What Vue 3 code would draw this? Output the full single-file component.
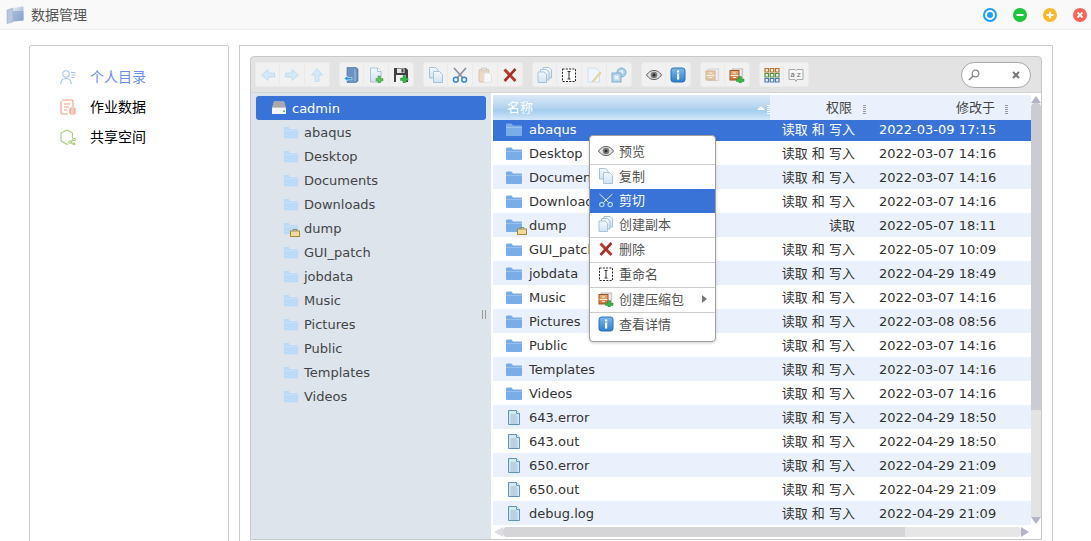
<template>
  <svg class="defs" width="0" height="0">
    <defs>
      <linearGradient id="g-doc" x1="0" y1="0" x2="0" y2="1"><stop offset="0" stop-color="#f4f9fd" /><stop offset="1" stop-color="#cfe2f1" /></linearGradient>
      <linearGradient id="g-info" x1="0" y1="0" x2="0" y2="1"><stop offset="0" stop-color="#7db8ee" /><stop offset="1" stop-color="#2f7fcb" /></linearGradient>
      <linearGradient id="g-box" x1="0" y1="0" x2="0" y2="1"><stop offset="0" stop-color="#e9b27c" /><stop offset="1" stop-color="#c9713a" /></linearGradient>
      <linearGradient id="g-title" x1="0" y1="0" x2="1" y2="1"><stop offset="0" stop-color="#e6ecf6" /><stop offset="1" stop-color="#8ea7cf" /></linearGradient>
      <symbol id="i-back" viewBox="0 0 16 16"><path d="M1.500 8 8 2.500V6h6.500v4H8v3.500z" fill="#d5e8f7" stroke="#c4deF1" /></symbol>
      <symbol id="i-forward" viewBox="0 0 16 16"><path d="M14.500 8 8 2.500V6H1.500v4H8v3.500z" fill="#d5e8f7" stroke="#c4deF1" /></symbol>
      <symbol id="i-up" viewBox="0 0 16 16"><path d="M8 1.500 13.500 8H10v6.500H6V8H2.500z" fill="#d5e8f7" stroke="#c4deF1" /></symbol>
      <symbol id="i-open" viewBox="0 0 16 16"><path d="M3 .5h9l2 1.500v12l-2 1.500H3z" fill="#6a93c2" stroke="#3f6795" stroke-width=".6" /><path d="M11 2v12" stroke="#a5c0dc" /><path d="M0 11.500 3.500 9v1.500H8v2.200H3.500v1.300z" fill="#1f8fe0" stroke="#fff" stroke-width=".5" /></symbol>
      <symbol id="i-newfile" viewBox="0 0 16 16"><path d="M2.500 1h7l3.500 3.500V15H2.500z" fill="url(#g-doc)" stroke="#a9c4d9" /><path d="M9.500 1v3.500H13" fill="#fff" stroke="#a9c4d9" /><path d="M10 9h2.500v2.500H15V14h-2.500v2H10v-2H8v-2.500h2z" fill="#5fbf57" stroke="#3e9a3b" stroke-width=".5" /></symbol>
      <symbol id="i-save" viewBox="0 0 16 16"><path d="M1 1h12l2 2v12H1z" fill="#3f3f44" /><rect x="4" y="1.500" width="7.500" height="4.500" fill="#e6e6e6" /><rect x="8.500" y="2" width="2" height="3.500" fill="#444" /><rect x="3" y="8" width="10" height="7" fill="#f3f3f3" /><path d="M10 8.500h2.500V11H15v2.500h-2.500V16H10v-2.500H7.500V11H10z" fill="#38b548" stroke="#208a33" stroke-width=".5" /></symbol>
      <symbol id="i-copy" viewBox="0 0 16 16"><path d="M1.500 .5h6L10 3v8H1.500z" fill="url(#g-doc)" stroke="#a6c3da" /><path d="M5.500 4.500h6l3 3v8h-9z" fill="url(#g-doc)" stroke="#a6c3da" /></symbol>
      <symbol id="i-cut" viewBox="0 0 16 16"><path d="M2 1 10.500 10.500M14 1 5.500 10.500" stroke="#8c939b" stroke-width="1.800" fill="none" /><circle cx="3.800" cy="12.700" r="2.400" fill="none" stroke="#3a86c9" stroke-width="1.500" /><circle cx="12.200" cy="12.700" r="2.400" fill="none" stroke="#3a86c9" stroke-width="1.500" /></symbol>
      <symbol id="i-cutw" viewBox="0 0 16 16"><path d="M1.500 2 10.500 10.500M14.500 2 5.500 10.500" stroke="#e4eefb" stroke-width="1" fill="none" /><circle cx="3.800" cy="12.500" r="2.200" fill="none" stroke="#a9d4f5" stroke-width="1.200" /><circle cx="12.200" cy="12.500" r="2.200" fill="none" stroke="#a9d4f5" stroke-width="1.200" /></symbol>
      <symbol id="i-paste" viewBox="0 0 16 16"><rect x="2" y="2.500" width="10" height="12.500" rx="1" fill="#ecd8c3" stroke="#dcc3a8" /><rect x="4.500" y="1" width="5" height="3" fill="#dedede" stroke="#c6c6c6" stroke-width=".6" /><path d="M7 6h5l2.500 2.500V15.500H7z" fill="#f8f8f8" stroke="#e2e2e2" /></symbol>
      <symbol id="i-delete" viewBox="0 0 16 16"><path d="M2.500 2.500 13.500 14" stroke="#b63a30" stroke-width="3" fill="none" /><path d="M13.500 2 2.500 14" stroke="#a52f27" stroke-width="2.600" fill="none" /></symbol>
      <symbol id="i-duplicate" viewBox="0 0 16 16"><path d="M6 .5h6L14.500 3v8H6z" fill="url(#g-doc)" stroke="#a6c3da" /><path d="M3.500 2.500h6L12 5v8H3.500z" fill="url(#g-doc)" stroke="#a6c3da" /><path d="M1 5h6l2.500 2.500v8H1z" fill="url(#g-doc)" stroke="#a6c3da" /></symbol>
      <symbol id="i-rename" viewBox="0 0 16 16"><rect x="1.500" y="2" width="13" height="12.500" fill="#fff" stroke="#222" stroke-dasharray="2 1.300" /><path d="M6.500 4.500h3M8 4.500v7.500M6.500 12h3" stroke="#333" fill="none" /></symbol>
      <symbol id="i-edit" viewBox="0 0 16 16"><path d="M2 1h8l3.500 3.500V15H2z" fill="#eef5fb" stroke="#cfe0ec" /><path d="M7 13l7-8 1.200 1-7 8-2 .7z" fill="#ecd9a8" stroke="#d9bf80" stroke-width=".5" /></symbol>
      <symbol id="i-share" viewBox="0 0 16 16"><circle cx="10.500" cy="5.500" r="4.500" fill="#a9cfe9" stroke="#7fb1d3" /><circle cx="10.500" cy="5" r="2" fill="#e6f2fa" /><rect x="1" y="6" width="9" height="9" fill="#b7d3e7" stroke="#86adc9" /><path d="M3.500 8.500h4v4h-4z" fill="#e9f3fa" /></symbol>
      <symbol id="i-eye" viewBox="0 0 16 16"><path d="M.5 8C3 4.500 5.500 3.500 8 3.500S13 4.500 15.500 8c-2.500 3.500-5 4.500-7.500 4.500S3 11.500.5 8z" fill="#e4e4e4" stroke="#555" /><circle cx="8" cy="8" r="3.300" fill="#7d7d7d" /><circle cx="8" cy="8" r="1.500" fill="#2c2c2c" /></symbol>
      <symbol id="i-info" viewBox="0 0 16 16"><rect x="1" y="1" width="14" height="14" rx="2.500" fill="url(#g-info)" stroke="#2a6fb3" /><rect x="7" y="3.500" width="2.200" height="2" fill="#fff" /><rect x="7" y="6.500" width="2.200" height="6" fill="#fff" /></symbol>
      <symbol id="i-extract" viewBox="0 0 16 16"><path d="M3 2h11l-1 1.500 1 1.500-1 1.500 1 1.500-1 1.500 1 1.500-1 1.500 1 1H3z" fill="#eee" stroke="#d2d2d2" /><rect x="1" y="4" width="9" height="9" fill="#e6c9ad" stroke="#d4b193" /><path d="M1.500 8.500h8M4 6h3M4 10.500h3" stroke="#f8eee4" /></symbol>
      <symbol id="i-archive" viewBox="0 0 16 16"><path d="M3 2h11l-1 1.500 1 1.500-1 1.500 1 1.500-1 1.500 1 1.500H3z" fill="#eee" stroke="#b8b8b8" /><rect x="1" y="3.500" width="9" height="9.500" fill="url(#g-box)" stroke="#9a5426" /><path d="M1.500 8.500h8M4 6h3M4 10.500h3" stroke="#fbe9d6" /><path d="M10 9.500h2.500V12H15v2.500h-2.500V17H10v-2.500H7.500V12H10z" fill="#38b548" stroke="#208a33" stroke-width=".5" /></symbol>
      <symbol id="i-grid" viewBox="0 0 16 16"><path d="M1 1.500h3.500V5H1zM6.300 1.500h3.500V5H6.300zM11.500 1.500H15V5h-3.500z" fill="none" stroke="#b3752e" stroke-width="1.200" /><path d="M1 6.500h3.500V10H1zM6.300 6.500h3.500V10H6.300zM11.500 6.500H15V10h-3.500z" fill="none" stroke="#58913e" stroke-width="1.200" /><path d="M1 11.500h3.500V15H1zM6.300 11.500h3.500V15H6.300zM11.500 11.500H15V15h-3.500z" fill="none" stroke="#4a78b3" stroke-width="1.200" /></symbol>
      <symbol id="i-sort" viewBox="0 0 16 16"><path d="M1 2.500h6L8 3.500l1-1h6v10H9l-1 2-1-2H1z" fill="#f8f8f8" stroke="#a8a8a8" /><text x="2.300" y="10" font-size="7.500" font-family="DejaVu Sans" fill="#666">a</text><text x="8.800" y="10" font-size="7.500" font-family="DejaVu Sans" fill="#666">z</text></symbol>
      <symbol id="i-folder" viewBox="0 0 18 16"><path d="M1 3.500a1 1 0 0 1 1-1h4.500l1.500 2h8a1 1 0 0 1 1 1V14a1 1 0 0 1-1 1H2a1 1 0 0 1-1-1z" fill="currentColor" /><path d="M1 6.500h16" stroke="#fff" stroke-opacity=".25" /></symbol>
      <symbol id="i-textfile" viewBox="0 0 12 15"><path d="M.5 .5h8l3 3v11H.5z" fill="#d6e6f2" stroke="#5c94c0" /><path d="M8.500 .5v3h3" fill="#fff" stroke="#5c94c0" /><path d="M2.500 5h6M2.500 7h7M2.500 9h7M2.500 11h7M2.500 13h7" stroke="#9dbbd3" /></symbol>
      <symbol id="i-lock" viewBox="0 0 10 9"><rect x=".5" y="3" width="9" height="5.500" fill="#f0dc9a" stroke="#a68b3f" /><path d="M3 3V1.500h4V3" fill="none" stroke="#8a8a8a" /></symbol>
      <symbol id="i-drive" viewBox="0 0 16 16"><path d="M3 1.500h10L15 8v6H1V8z" fill="#c9c9c9" /><path d="M3 1.500h10L14.500 7h-13z" fill="#a9a9a9" /><rect x="1" y="8" width="14" height="6" rx="1" fill="#f6f6f6" /><rect x="12" y="10.500" width="2" height="1.500" fill="#4fc04f" /></symbol>
    </defs>
  </svg>

  <div class="page">
    <header class="titlebar">
      <div class="title">
        <svg class="title-icon" viewBox="0 0 18 18">
          <path d="M1 4 7 2v14l-6 1.500z" fill="#b9c8e0" stroke="#8ea7cf" stroke-width=".5" />
          <path d="M7 2l9-1.500a1 1 0 0 1 1.500 1V14L7 16z" fill="url(#g-title)" />
          <path d="M7 5h10.500v10H7z" fill="#7f9cc9" opacity=".55" />
        </svg>
        <span class="up">数据管理</span>
      </div>
      <div class="win-buttons">
        <span class="win win-blue"><i></i></span>
        <span class="win win-green">
          <svg viewBox="0 0 14 14"><path d="M3.500 7h7" stroke="#fff" stroke-width="2" /></svg>
        </span>
        <span class="win win-orange">
          <svg viewBox="0 0 14 14"><path d="M3.500 7h7M7 3.500v7" stroke="#fff" stroke-width="2" /></svg>
        </span>
        <span class="win win-red">
          <svg viewBox="0 0 14 14"><path d="M4.500 4.500l5 5M9.500 4.500l-5 5" stroke="#fff" stroke-width="2" /></svg>
        </span>
      </div>
    </header>

    <main class="content">
      <aside class="side-card">
        <div v-for="item in sideItems" :key="item.label" class="side-item" :class="{ active: item.active }">
          <svg v-if="item.kind === 'user'" class="side-icon" viewBox="0 0 16 16" fill="none" stroke="#a5c3f0" stroke-width="1.100">
            <circle cx="6" cy="5" r="3.200" />
            <path d="M.8 15c0-3.500 2.300-5.500 5.200-5.500S11.200 11.500 11.200 15" />
            <path d="M11 3.500h4.500M11.500 6h4M11.500 8.500h3" />
          </svg>
          <svg v-else-if="item.kind === 'job'" class="side-icon" viewBox="0 0 16 16" fill="none" stroke="#f49b85" stroke-width="1.100">
            <path d="M2 1h10a1 1 0 0 1 1 1v6M8 15H2a1 1 0 0 1-1-1V2" />
            <path d="M4 5h6M4 8h5M4 11h3" />
            <rect x="10" y="9" width="5" height="6" rx="1" />
            <path d="M10 11h5M10 13h5" />
          </svg>
          <svg v-else class="side-icon" viewBox="0 0 16 16" fill="none" stroke="#a9cb7a" stroke-width="1.100">
            <path d="M7 1l5.500 3v5M8 15l-1 .3-6-3.300V4l6-3" />
            <circle cx="14" cy="10.500" r="1.300" />
            <circle cx="10" cy="13" r="1.300" />
            <circle cx="14" cy="15" r="1" />
            <path d="M11 12.500l2-1.500M11 13.500l2 1" />
          </svg>
          <span class="up">{{ item.label }}</span>
        </div>
      </aside>

      <section class="main-card">
        <div class="manager">
          <div class="toolbar">
            <div v-for="(group, i) in toolGroups" :key="i" class="tool-group">
              <span v-for="tool in group" :key="tool" class="tool">
                <svg class="ic"><use :href="'#i-' + tool" /></svg>
              </span>
            </div>
            <div class="search">
              <svg class="search-glass" viewBox="0 0 12 12" fill="none" stroke="#888" stroke-width="1.200">
                <circle cx="7.500" cy="4.500" r="3.300" />
                <path d="M5 7 1 11" stroke-width="1.600" />
              </svg>
              <svg class="search-clear" viewBox="0 0 8 8"><path d="M1 1l6 6M7 1 1 7" stroke="#777" stroke-width="2" /></svg>
            </div>
          </div>

          <div class="panes">
            <nav class="tree">
              <div class="tree-root">
                <svg class="ic"><use href="#i-drive" /></svg>
                <span>cadmin</span>
              </div>
              <div v-for="dir in dirs" :key="dir.name" class="tree-item">
                <span class="tree-folder">
                  <svg class="ic-folder"><use href="#i-folder" /></svg>
                  <svg v-if="dir.locked" class="lock"><use href="#i-lock" /></svg>
                </span>
                <span>{{ dir.name }}</span>
              </div>
              <span class="splitter"></span>
            </nav>

            <div class="files">
              <div class="files-top">
                <div class="table">
                  <div class="thead">
                    <div class="th-name">
                      <span class="up">名称</span>
                      <i class="sort-up"></i>
                      <i class="grip light"></i>
                    </div>
                    <div class="th-perm"><span class="up">权限</span><i class="grip"></i></div>
                    <div class="th-date"><span class="up">修改于</span><i class="grip"></i></div>
                  </div>
                  <div
                    v-for="(row, i) in rows"
                    :key="row.name"
                    class="row"
                    :class="{ selected: i === 0, first: i === 0, odd: i % 2 === 0 && i > 0 }"
                  >
                    <div class="cell-name">
                      <span class="file-icon">
                        <svg v-if="row.dir" class="ic-folder"><use href="#i-folder" /></svg>
                        <svg v-else class="ic-text"><use href="#i-textfile" /></svg>
                        <svg v-if="row.locked" class="lock"><use href="#i-lock" /></svg>
                      </span>
                      <span>{{ row.name }}</span>
                    </div>
                    <div class="cell-perm"><span class="up">{{ row.perm }}</span></div>
                    <div class="cell-date">{{ row.date }}</div>
                  </div>
                </div>
                <div class="vscroll">
                  <i class="arrow-up"></i>
                  <div class="vthumb"></div>
                  <div class="vtrack"></div>
                  <i class="arrow-down"></i>
                </div>
              </div>
              <div class="hscroll">
                <i class="arrow-left"></i>
                <div class="hthumb"></div>
                <div class="htrack"></div>
                <i class="arrow-right"></i>
              </div>
            </div>
          </div>

          <ul class="menu">
            <template v-for="(entry, i) in menuItems" :key="i">
              <li v-if="entry.sep" class="menu-sep"></li>
              <li v-else class="menu-item" :class="{ hover: entry.hover }">
                <svg class="ic"><use :href="'#i-' + entry.icon" /></svg>
                <span class="up">{{ entry.label }}</span>
                <i v-if="entry.more" class="menu-more"></i>
              </li>
            </template>
          </ul>
        </div>
      </section>
    </main>
  </div>
</template>

<script setup>
const sideItems = [
  { label: '个人目录', kind: 'user', active: true },
  { label: '作业数据', kind: 'job' },
  { label: '共享空间', kind: 'share' }
]

const toolGroups = [
  ['back', 'forward', 'up'],
  ['open', 'newfile', 'save'],
  ['copy', 'cut', 'paste', 'delete'],
  ['duplicate', 'rename', 'edit', 'share'],
  ['eye', 'info'],
  ['extract', 'archive'],
  ['grid', 'sort']
]

const dirs = [
  { name: 'abaqus' },
  { name: 'Desktop' },
  { name: 'Documents' },
  { name: 'Downloads' },
  { name: 'dump', locked: true },
  { name: 'GUI_patch' },
  { name: 'jobdata' },
  { name: 'Music' },
  { name: 'Pictures' },
  { name: 'Public' },
  { name: 'Templates' },
  { name: 'Videos' }
]

const rw = '读取 和 写入'

const rows = [
  { name: 'abaqus', dir: true, perm: rw, date: '2022-03-09 17:15' },
  { name: 'Desktop', dir: true, perm: rw, date: '2022-03-07 14:16' },
  { name: 'Documents', dir: true, perm: rw, date: '2022-03-07 14:16' },
  { name: 'Downloads', dir: true, perm: rw, date: '2022-03-07 14:16' },
  { name: 'dump', dir: true, locked: true, perm: '读取', date: '2022-05-07 18:11' },
  { name: 'GUI_patch', dir: true, perm: rw, date: '2022-05-07 10:09' },
  { name: 'jobdata', dir: true, perm: rw, date: '2022-04-29 18:49' },
  { name: 'Music', dir: true, perm: rw, date: '2022-03-07 14:16' },
  { name: 'Pictures', dir: true, perm: rw, date: '2022-03-08 08:56' },
  { name: 'Public', dir: true, perm: rw, date: '2022-03-07 14:16' },
  { name: 'Templates', dir: true, perm: rw, date: '2022-03-07 14:16' },
  { name: 'Videos', dir: true, perm: rw, date: '2022-03-07 14:16' },
  { name: '643.error', perm: rw, date: '2022-04-29 18:50' },
  { name: '643.out', perm: rw, date: '2022-04-29 18:50' },
  { name: '650.error', perm: rw, date: '2022-04-29 21:09' },
  { name: '650.out', perm: rw, date: '2022-04-29 21:09' },
  { name: 'debug.log', perm: rw, date: '2022-04-29 21:09' }
]

const menuItems = [
  { label: '预览', icon: 'eye' },
  { sep: true },
  { label: '复制', icon: 'copy' },
  { label: '剪切', icon: 'cutw', hover: true },
  { label: '创建副本', icon: 'duplicate' },
  { sep: true },
  { label: '删除', icon: 'delete' },
  { sep: true },
  { label: '重命名', icon: 'rename' },
  { sep: true },
  { label: '创建压缩包', icon: 'archive', more: true },
  { sep: true },
  { label: '查看详情', icon: 'info' }
]
</script>

<style>
html,
body {
  margin: 0;
  height: 100%;
  overflow: hidden;
  background: #fff;
}
</style>

<style scoped>
.defs {
  position: absolute;
}
.page {
  height: 541px;
  overflow: hidden;
  display: flex;
  flex-direction: column;
  font-family: "DejaVu Sans", "Noto Sans CJK SC", sans-serif;
  font-size: 13px;
}
/* the CJK font sits a pixel low compared to the reference */
.up {
  display: inline-block;
  padding-bottom: 2px;
}
.titlebar {
  flex: none;
  height: 29px;
  display: flex;
  justify-content: space-between;
  align-items: center;
  background: #f9f9f9;
  border-bottom: 1px solid #eee;
  padding: 0 4px 0 6px;
}
.title {
  display: flex;
  align-items: center;
  gap: 7px;
  font-family: "Noto Sans CJK SC", sans-serif;
  font-size: 14px;
  color: #555;
}
.title-icon {
  width: 18px;
  height: 18px;
}
.win-buttons {
  display: flex;
  gap: 16px;
}
.win {
  width: 14px;
  height: 14px;
  border-radius: 50%;
  display: block;
}
.win svg {
  display: block;
  width: 14px;
  height: 14px;
}
.win-blue {
  box-sizing: border-box;
  border: 2px solid #1e9fff;
  padding: 2px;
}
.win-blue i {
  display: block;
  width: 6px;
  height: 6px;
  border-radius: 50%;
  background: #1e9fff;
}
.win-green {
  background: #1fc63c;
}
.win-orange {
  background: #ffb727;
}
.win-red {
  background: #ff5f57;
}

.content {
  flex: 1;
  display: flex;
  gap: 10px;
  padding: 15px 38px 0 29px;
  min-height: 0;
}
.side-card {
  flex: none;
  box-sizing: border-box;
  width: 200px;
  height: 520px;
  border: 1px solid #ccc;
  border-radius: 2px;
  padding: 16px 0 0 30px;
}
.side-item {
  height: 30px;
  display: flex;
  align-items: center;
  gap: 14px;
  font-family: "Noto Sans CJK SC", sans-serif;
  font-size: 14px;
  color: #000;
}
.side-item.active {
  color: #6c8df5;
}
.side-icon {
  width: 16px;
  height: 16px;
}
.main-card {
  flex: 1;
  box-sizing: border-box;
  height: 520px;
  border: 1px solid #ccc;
  padding: 10px 10px 0;
}

.manager {
  position: relative;
  box-sizing: border-box;
  height: 484px;
  display: flex;
  flex-direction: column;
  border: 1px solid #c8c8c8;
  border-radius: 4px 4px 0 0;
  background: #e3e3e3;
}
.toolbar {
  flex: none;
  height: 36px;
  display: flex;
  align-items: center;
  gap: 9px;
  padding: 0 10px 0 4px;
  border-bottom: 1px solid #d4d4d4;
  box-sizing: border-box;
}
.tool-group {
  display: flex;
}
.tool {
  box-sizing: border-box;
  width: 25px;
  height: 25px;
  display: flex;
  align-items: center;
  justify-content: center;
  background: #f1f1f1;
  border: 1px solid #eaeaea;
  border-left-width: 0;
}
.tool:first-child {
  border-left-width: 1px;
  border-radius: 3px 0 0 3px;
}
.tool:last-child {
  border-radius: 0 3px 3px 0;
}
.ic {
  flex: none;
  width: 16px;
  height: 16px;
}
.search {
  margin-left: auto;
  box-sizing: border-box;
  width: 70px;
  height: 26px;
  border: 1px solid #a8a8a8;
  border-radius: 13px;
  background: #fff;
  display: flex;
  align-items: center;
  justify-content: space-between;
  padding: 0 10px 0 6px;
}
.search-glass {
  width: 12px;
  height: 12px;
}
.search-clear {
  width: 8px;
  height: 8px;
}

.panes {
  flex: 1;
  min-height: 0;
  display: flex;
  background: #fff;
}
.tree {
  position: relative;
  flex: none;
  box-sizing: border-box;
  width: 240px;
  background: #dde4ec;
  padding: 3px 5px 0;
  color: #444;
}
.tree-root {
  height: 24px;
  display: flex;
  align-items: center;
  gap: 5px;
  padding-left: 15px;
  background: #3a73d7;
  border-radius: 3px;
  color: #fff;
}
.tree-item {
  height: 24px;
  display: flex;
  align-items: center;
  gap: 5px;
  padding-left: 27px;
}
.tree-folder,
.file-icon {
  position: relative;
  display: flex;
  flex: none;
}
.tree-folder {
  width: 16px;
  color: #bcd9f6;
}
.tree-folder .ic-folder {
  width: 16px;
}
.ic-folder {
  width: 18px;
  height: 16px;
}
.file-icon {
  width: 18px;
  height: 16px;
  align-items: center;
  color: #78ade9;
}
.ic-text {
  width: 12px;
  height: 15px;
  margin-left: 3px;
}
.lock {
  position: absolute;
  right: -4px;
  bottom: -2px;
  width: 10px;
  height: 9px;
}
.tree-folder .lock {
  right: -1px;
  bottom: -1px;
}
.splitter {
  position: absolute;
  right: 5px;
  top: 217px;
  width: 2px;
  height: 9px;
  border-left: 1px solid #999;
  border-right: 1px solid #999;
}

.files {
  flex: 1;
  min-width: 0;
  display: flex;
  flex-direction: column;
  margin-left: 2px;
  color: #333;
}
.files-top {
  flex: 1;
  min-height: 0;
  display: flex;
  padding-top: 2px;
}
.table {
  flex: 1;
  min-width: 0;
}
.thead {
  height: 25px;
  display: grid;
  grid-template-columns: 277px 98px 1fr;
  background: #ebf1fc;
  color: #444;
}
.thead > div {
  position: relative;
  display: flex;
  align-items: center;
}
.th-name {
  background: linear-gradient(#dbe9f6, #b9d6f0 45%, #a4cdee 62%, #d3e8fa);
  color: #fff;
  padding-left: 14px;
}
.th-perm {
  justify-content: flex-end;
  padding-right: 16px;
}
.th-date {
  justify-content: flex-end;
  padding-right: 36px;
}
.grip {
  position: absolute;
  right: 2px;
  top: 10px;
  width: 3px;
  height: 10px;
  background: repeating-linear-gradient(#999 0 1px, transparent 1px 2px);
}
.th-date .grip {
  right: 23px;
}
.grip.light {
  right: 0;
  background: repeating-linear-gradient(#fff 0 1px, transparent 1px 2px);
}
.sort-up {
  position: absolute;
  right: 5px;
  top: 11px;
  border-left: 4px solid transparent;
  border-right: 4px solid transparent;
  border-bottom: 4px solid #fff;
}
.row {
  height: 24px;
  display: grid;
  grid-template-columns: 277px 98px 1fr;
  align-items: center;
}
.row.first {
  height: 21px;
}
.row.first > div {
  margin-top: -3px;
}
.row.odd {
  background: #ebf1fc;
}
.row.selected {
  background: #3a73d7;
  color: #fff;
}
.cell-name {
  display: flex;
  align-items: center;
  gap: 6px;
  padding-left: 12px;
  white-space: nowrap;
}
.cell-perm {
  text-align: right;
  padding-right: 13px;
}
.cell-date {
  padding-left: 11px;
  white-space: nowrap;
}

.vscroll {
  flex: none;
  width: 10px;
  display: flex;
  flex-direction: column;
  align-items: center;
  background: #fff;
}
.vthumb {
  flex: none;
  width: 100%;
  height: 307px;
  background: #cbcbd3;
  border-radius: 4px 4px 0 0;
}
.vtrack {
  flex: 1;
  width: 100%;
  background: #e3e3e3;
}
.arrow-up,
.arrow-down,
.arrow-left,
.arrow-right {
  flex: none;
  display: block;
}
.arrow-up {
  margin-top: 1px;
  border-left: 5px solid transparent;
  border-right: 5px solid transparent;
  border-bottom: 7px solid #b4b4c8;
}
.arrow-down {
  margin: 0 0 1px;
  border-left: 5px solid transparent;
  border-right: 5px solid transparent;
  border-top: 7px solid #b4b4c8;
}
.hscroll {
  flex: none;
  height: 14px;
  display: flex;
  align-items: center;
  padding: 0 12px 0 1px;
  background: #fff;
}
.hthumb {
  width: 402px;
  height: 10px;
  background: #d5d5d8;
  border-radius: 4px 0 0 4px;
}
.htrack {
  flex: 1;
  height: 10px;
  background: #e6e6e6;
  border-radius: 0 4px 4px 0;
}
.arrow-left {
  border-top: 5px solid transparent;
  border-bottom: 5px solid transparent;
  border-right: 9px solid #dcdce4;
}
.arrow-right {
  border-top: 5px solid transparent;
  border-bottom: 5px solid transparent;
  border-left: 8px solid #b4b4c8;
}

.menu {
  position: absolute;
  left: 338px;
  top: 78px;
  box-sizing: border-box;
  width: 127px;
  margin: 0;
  padding: 4px 0;
  list-style: none;
  background: #fff;
  border: 1px solid #a0a0a0;
  border-radius: 4px;
  box-shadow: 0 1px 3px rgba(0, 0, 0, 0.2);
  font-family: "Noto Sans CJK SC", sans-serif;
  font-size: 13px;
  color: #555;
}
.menu-item {
  position: relative;
  box-sizing: border-box;
  height: 24px;
  display: flex;
  align-items: center;
  gap: 5px;
  padding: 0 0 2px 8px;
}
.menu-item.hover {
  background: #3a73d7;
  color: #fff;
}
.menu-sep {
  height: 1px;
  background: #ccc;
}
.menu-more {
  position: absolute;
  right: 8px;
  top: 7px;
  border-top: 4px solid transparent;
  border-bottom: 4px solid transparent;
  border-left: 5px solid #777;
}
</style>
